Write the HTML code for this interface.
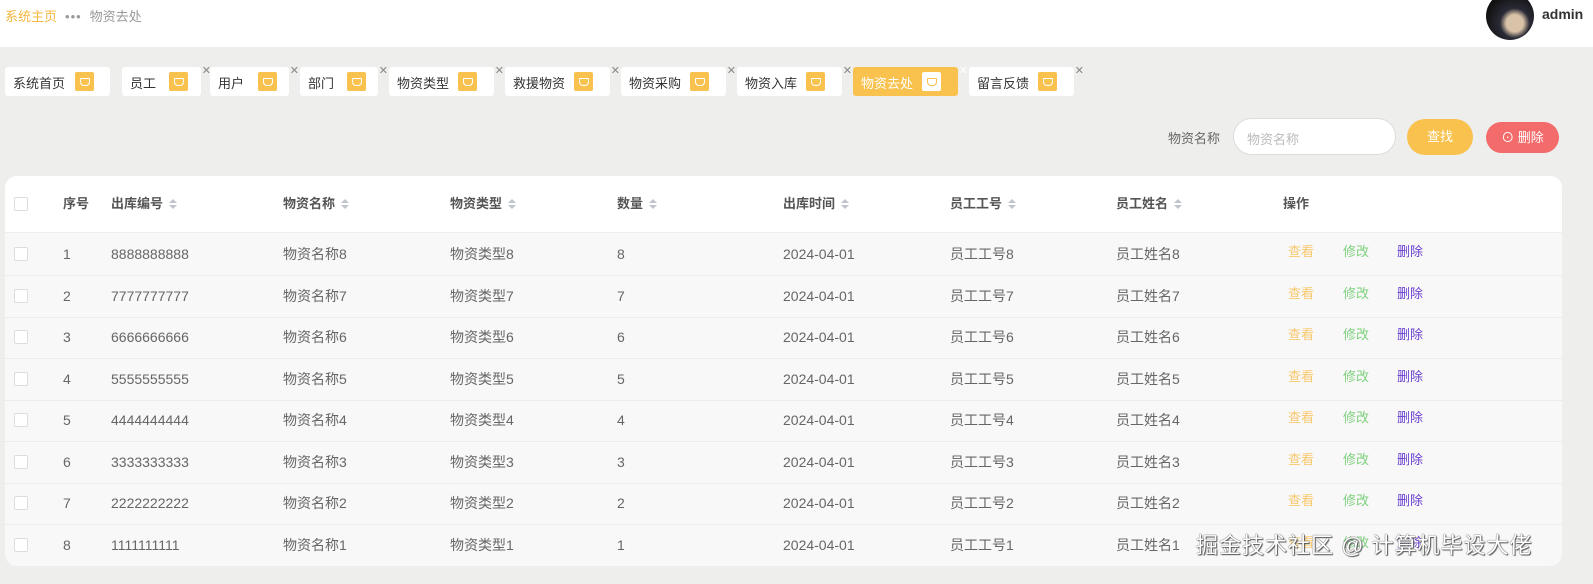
<!DOCTYPE html>
<html><head><meta charset="utf-8"><style>
*{margin:0;padding:0;box-sizing:border-box}
body{width:1593px;height:584px;background:#eeeeec;font-family:"Liberation Sans","Noto Sans CJK SC",sans-serif;position:relative;overflow:hidden;color:#606266}
.top{position:absolute;left:0;top:0;width:1593px;height:47px;background:#fff}
.bc{position:absolute;left:5px;top:6px;font-size:13px;color:#f4b73f}
.bc .d{color:#999;margin:0 8px;letter-spacing:1px}
.bc .c{color:#999}
.av{position:absolute;left:1486px;top:-8px;width:48px;height:48px;border-radius:50%;background:radial-gradient(circle at 60% 65%,#d9c3a8 0 20%,#2a2a36 35%,#111 70%)}
.adm{position:absolute;left:1542px;top:6px;font-weight:bold;font-size:14px;color:#333}
.tag{position:absolute;top:67px;height:29px;background:#fff;border-radius:3px;font-size:13px;color:#333;padding:6px 0 0 8px}
.tag .i{position:absolute;top:5px;width:19px;height:19px;background:#f9c24f;border-radius:2px}
.tag .i:after{content:"";position:absolute;left:5px;top:6px;width:8px;height:6px;border:1px solid #fff;border-radius:1px 1px 4px 4px}
.tag .x{position:absolute;right:-10px;top:-3px;font-size:11px;color:#888}
.tag.on{background:#f9c24f;color:#fff}
.tag.on .i{background:#fff}
.tag.on .i:after{border-color:#f9c24f}
.lbl{position:absolute;left:1168px;top:128px;font-size:13px;color:#666}
.inp{position:absolute;left:1233px;top:118px;width:163px;height:37px;border:1px solid #ddd;border-radius:19px;background:#fff;font-size:13px;color:#bbb;padding:10px 0 0 13px}
.b1{position:absolute;left:1407px;top:119px;width:66px;height:36px;border-radius:18px;background:#f9c24f;color:#fff;font-size:13px;text-align:center;line-height:36px}
.b2{position:absolute;left:1486px;top:122px;width:73px;height:31px;border-radius:16px;background:#f36b6b;color:#fff;font-size:13px;text-align:center;line-height:31px}
.card{position:absolute;left:5px;top:176px;width:1557px;height:390px;background:#f8f8f8;border-radius:12px;overflow:hidden}
.hd{position:absolute;left:0;top:0;width:1557px;height:57px;background:#fff;border-bottom:1px solid #eee}
.row{position:absolute;left:0;width:1557px;height:42px;border-bottom:1px solid #ececec}
.t{position:absolute;font-size:14px;white-space:nowrap;line-height:16px}
.hd .t{top:20px;font-weight:bold;color:#555;font-size:13px}
.row .t{top:12px;color:#666}
.cb{position:absolute;left:9px;width:14px;height:14px;border:1px solid #ddd;background:#fff;border-radius:2px}
.s{display:inline-block;margin-left:6px;width:8px;height:10px;vertical-align:middle;position:relative;top:-1px}
.s:before{content:"";position:absolute;left:0;top:0;border-left:4px solid transparent;border-right:4px solid transparent;border-bottom:4px solid #c0c4cc}
.s:after{content:"";position:absolute;left:0;top:6px;border-left:4px solid transparent;border-right:4px solid transparent;border-top:4px solid #c0c4cc}
.row .a1{color:#f7c86d;font-size:13px}.row .a2{color:#7ed07e;font-size:13px}.row .a3{color:#6a3fd0;font-size:13px}
.c1{left:58px}.c2{left:106px}.c3{left:278px}.c4{left:445px}.c5{left:612px}.c6{left:778px}.c7{left:945px}.c8{left:1111px}
.o1{left:1283px}.o2{left:1338px}.o3{left:1392px}
.wm{position:absolute;left:1196px;top:528px;font-size:22px;color:#fff;text-shadow:0 0 1px #555,0 0 1px #555,1px 1px 1px #555;letter-spacing:1px}
</style></head><body>
<div class="top"></div>
<div class="bc">系统主页<span class="d">•••</span><span class="c">物资去处</span></div>
<div class="av"></div><div class="adm">admin</div>

<div class="tag" style="left:5px;width:105px">系统首页<span class="i" style="left:70px"></span></div>
<div class="tag" style="left:122px;width:79px">员工<span class="i" style="left:47px"></span><span class="x">✕</span></div>
<div class="tag" style="left:210px;width:79px">用户<span class="i" style="left:48px"></span><span class="x">✕</span></div>
<div class="tag" style="left:300px;width:78px">部门<span class="i" style="left:47px"></span><span class="x">✕</span></div>
<div class="tag" style="left:389px;width:105px">物资类型<span class="i" style="left:69px"></span><span class="x">✕</span></div>
<div class="tag" style="left:505px;width:105px">救援物资<span class="i" style="left:69px"></span><span class="x">✕</span></div>
<div class="tag" style="left:621px;width:105px">物资采购<span class="i" style="left:69px"></span><span class="x">✕</span></div>
<div class="tag" style="left:737px;width:105px">物资入库<span class="i" style="left:69px"></span><span class="x">✕</span></div>
<div class="tag on" style="left:853px;width:105px">物资去处<span class="i" style="left:69px"></span><span class="x" style="color:#fff">✕</span></div>
<div class="tag" style="left:969px;width:105px">留言反馈<span class="i" style="left:69px"></span><span class="x">✕</span></div>

<div class="lbl">物资名称</div>
<div class="inp">物资名称</div>
<div class="b1">查找</div>
<div class="b2">⊙ 删除</div>

<div class="card">
<div class="hd">
<span class="cb" style="top:21px"></span>
<span class="t c1">序号</span>
<span class="t c2">出库编号<i class="s"></i></span>
<span class="t c3">物资名称<i class="s"></i></span>
<span class="t c4">物资类型<i class="s"></i></span>
<span class="t c5">数量<i class="s"></i></span>
<span class="t c6">出库时间<i class="s"></i></span>
<span class="t c7">员工工号<i class="s"></i></span>
<span class="t c8">员工姓名<i class="s"></i></span>
<span class="t" style="left:1278px">操作</span>
</div>
<div class="row" style="top:58px"><span class="cb" style="top:13px"></span><span class="t c1">1</span><span class="t c2">8888888888</span><span class="t c3">物资名称8</span><span class="t c4">物资类型8</span><span class="t c5">8</span><span class="t c6">2024-04-01</span><span class="t c7">员工工号8</span><span class="t c8">员工姓名8</span><span class="t a1 o1" style="top:10px">查看</span><span class="t a2 o2" style="top:10px">修改</span><span class="t a3 o3" style="top:10px">删除</span></div>
<div class="row" style="top:100px"><span class="cb" style="top:13px"></span><span class="t c1">2</span><span class="t c2">7777777777</span><span class="t c3">物资名称7</span><span class="t c4">物资类型7</span><span class="t c5">7</span><span class="t c6">2024-04-01</span><span class="t c7">员工工号7</span><span class="t c8">员工姓名7</span><span class="t a1 o1" style="top:10px">查看</span><span class="t a2 o2" style="top:10px">修改</span><span class="t a3 o3" style="top:10px">删除</span></div>
<div class="row" style="top:141px"><span class="cb" style="top:13px"></span><span class="t c1">3</span><span class="t c2">6666666666</span><span class="t c3">物资名称6</span><span class="t c4">物资类型6</span><span class="t c5">6</span><span class="t c6">2024-04-01</span><span class="t c7">员工工号6</span><span class="t c8">员工姓名6</span><span class="t a1 o1" style="top:10px">查看</span><span class="t a2 o2" style="top:10px">修改</span><span class="t a3 o3" style="top:10px">删除</span></div>
<div class="row" style="top:183px"><span class="cb" style="top:13px"></span><span class="t c1">4</span><span class="t c2">5555555555</span><span class="t c3">物资名称5</span><span class="t c4">物资类型5</span><span class="t c5">5</span><span class="t c6">2024-04-01</span><span class="t c7">员工工号5</span><span class="t c8">员工姓名5</span><span class="t a1 o1" style="top:10px">查看</span><span class="t a2 o2" style="top:10px">修改</span><span class="t a3 o3" style="top:10px">删除</span></div>
<div class="row" style="top:224px"><span class="cb" style="top:13px"></span><span class="t c1">5</span><span class="t c2">4444444444</span><span class="t c3">物资名称4</span><span class="t c4">物资类型4</span><span class="t c5">4</span><span class="t c6">2024-04-01</span><span class="t c7">员工工号4</span><span class="t c8">员工姓名4</span><span class="t a1 o1" style="top:10px">查看</span><span class="t a2 o2" style="top:10px">修改</span><span class="t a3 o3" style="top:10px">删除</span></div>
<div class="row" style="top:266px"><span class="cb" style="top:13px"></span><span class="t c1">6</span><span class="t c2">3333333333</span><span class="t c3">物资名称3</span><span class="t c4">物资类型3</span><span class="t c5">3</span><span class="t c6">2024-04-01</span><span class="t c7">员工工号3</span><span class="t c8">员工姓名3</span><span class="t a1 o1" style="top:10px">查看</span><span class="t a2 o2" style="top:10px">修改</span><span class="t a3 o3" style="top:10px">删除</span></div>
<div class="row" style="top:307px"><span class="cb" style="top:13px"></span><span class="t c1">7</span><span class="t c2">2222222222</span><span class="t c3">物资名称2</span><span class="t c4">物资类型2</span><span class="t c5">2</span><span class="t c6">2024-04-01</span><span class="t c7">员工工号2</span><span class="t c8">员工姓名2</span><span class="t a1 o1" style="top:10px">查看</span><span class="t a2 o2" style="top:10px">修改</span><span class="t a3 o3" style="top:10px">删除</span></div>
<div class="row" style="top:349px"><span class="cb" style="top:13px"></span><span class="t c1">8</span><span class="t c2">1111111111</span><span class="t c3">物资名称1</span><span class="t c4">物资类型1</span><span class="t c5">1</span><span class="t c6">2024-04-01</span><span class="t c7">员工工号1</span><span class="t c8">员工姓名1</span><span class="t a1 o1" style="top:10px">查看</span><span class="t a2 o2" style="top:10px">修改</span><span class="t a3 o3" style="top:10px">删除</span></div>
</div>
<div class="wm">掘金技术社区 @ 计算机毕设大佬</div>
</body></html>
